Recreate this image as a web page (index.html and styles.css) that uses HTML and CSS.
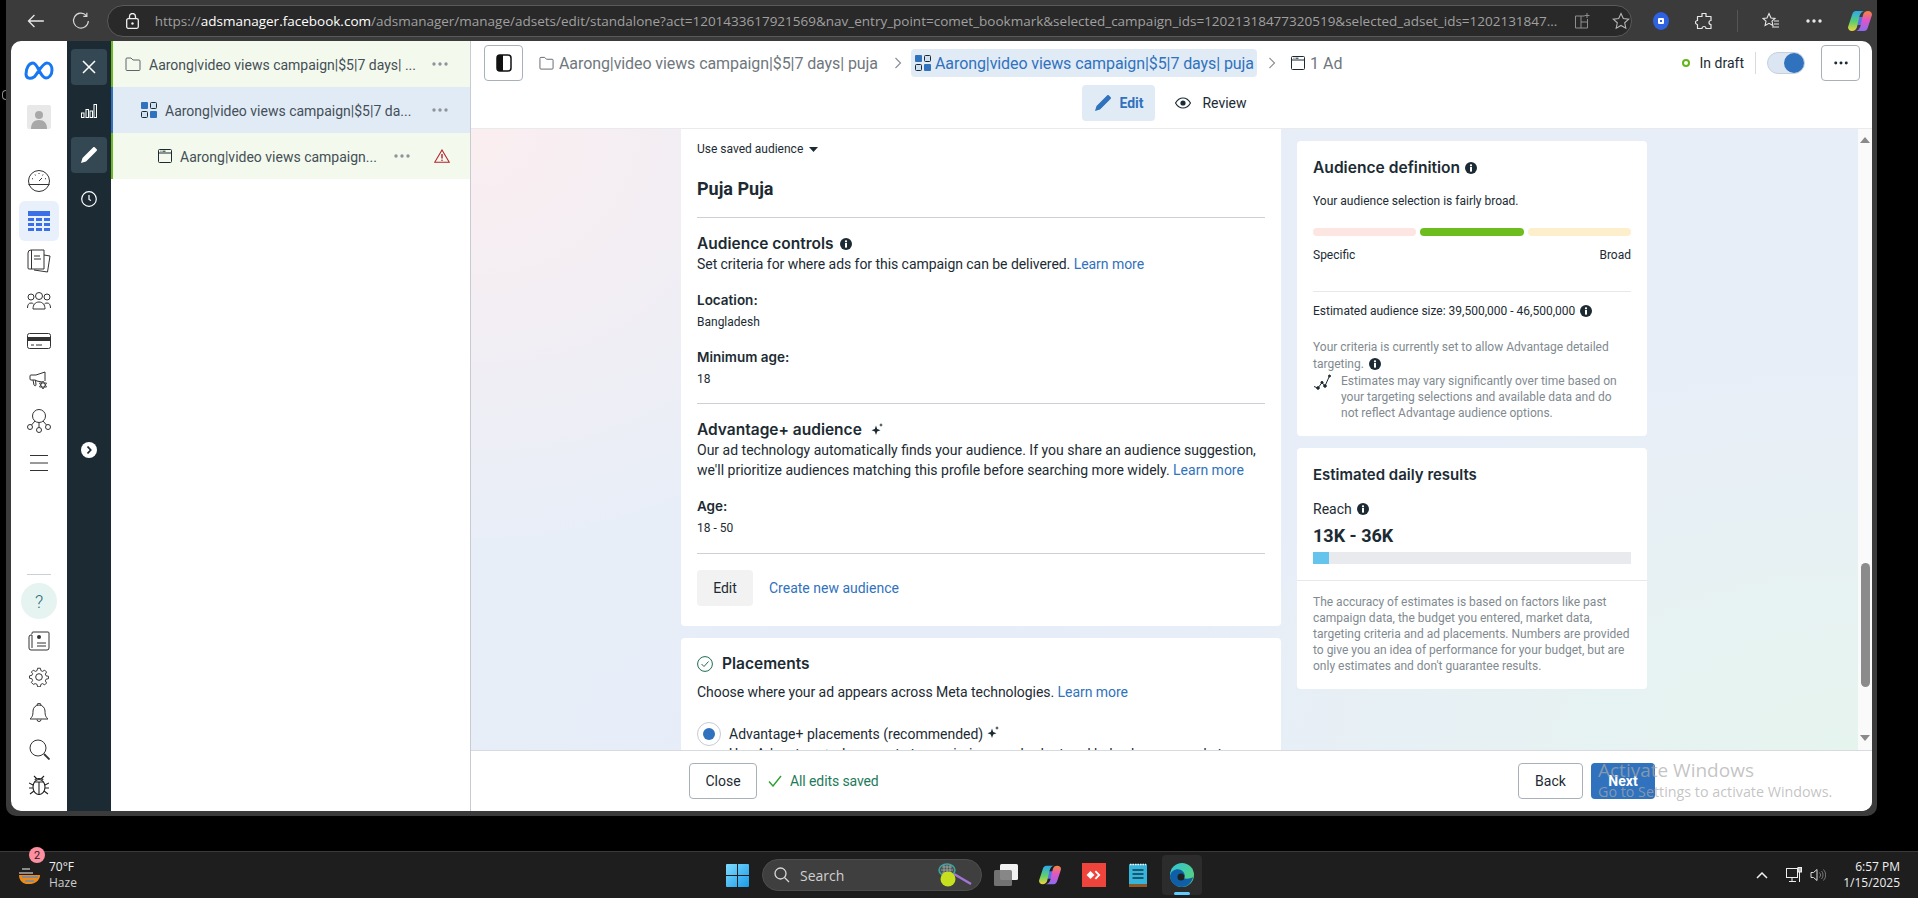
FILE: index.html
```html
<!DOCTYPE html>
<html>
<head>
    <title>Ads Manager - Edit ad set</title>
    <link rel="stylesheet" href="styles.css">
</head>
<body>
    <svg class="sprite" width="0" height="0">
        <defs>
            <linearGradient id="copL" x1="0" y1="0" x2="0" y2="1"><stop offset="0" stop-color="#2aa7f0"/><stop offset=".55" stop-color="#5fd06a"/><stop offset="1" stop-color="#f2d23c"/></linearGradient>
            <linearGradient id="copR" x1="0" y1="0" x2="0" y2="1"><stop offset="0" stop-color="#f5873a"/><stop offset=".45" stop-color="#e255c4"/><stop offset="1" stop-color="#8a6cf0"/></linearGradient>
        </defs>
        <symbol id="info" viewBox="0 0 12 12"><circle cx="6" cy="6" r="6" fill="#1c2b33"/><rect x="5" y="5" width="2" height="4.6" fill="#fff"/><circle cx="6" cy="3.3" r="1.15" fill="#fff"/></symbol>
        <symbol id="sparkle" viewBox="0 0 12 12"><path d="M5 2.5 6.2 6 9.5 7.2 6.2 8.4 5 12 3.8 8.4.5 7.2 3.8 6zM10 0l.6 1.5 1.4.5-1.4.5L10 4l-.6-1.5L8 2l1.400-.5z" fill="#1c2b33"/></symbol>
        <symbol id="dots" viewBox="0 0 16 4"><circle cx="2" cy="2" r="1.7"/><circle cx="8" cy="2" r="1.7"/><circle cx="14" cy="2" r="1.7"/></symbol>
        <symbol id="folder" viewBox="0 0 16 14"><path d="M1 3V2a1 1 0 0 1 1-1h4l2 2h6a1 1 0 0 1 1 1v8.500a1 1 0 0 1-1 1H2a1 1 0 0 1-1-1z" fill="none" stroke="currentColor" stroke-width="1"/></symbol>
        <symbol id="adset" viewBox="0 0 16 16"><rect x="0" y="0" width="7" height="7" rx="1" fill="#3072bd"/><rect x="9.500" y=".5" width="6" height="6" rx="1" fill="#cfe0f3" stroke="#1c2b33"/><rect x=".5" y="9.500" width="6" height="6" rx="1" fill="#cfe0f3" stroke="#1c2b33"/><rect x="9" y="9" width="7" height="7" rx="1" fill="#3072bd"/></symbol>
        <symbol id="adbox" viewBox="0 0 14 14"><rect x=".5" y=".5" width="13" height="13" rx="1" fill="none" stroke="#1c2b33"/><path d="M.5 4h13" stroke="#1c2b33"/><path d="M2.500 2.200h.9M4.500 2.200h3" stroke="#1c2b33"/></symbol>
        <symbol id="copilot" viewBox="0 0 24 24"><path d="M10 8h6l-2 8H8z" fill="#5a6ee8"/><path d="M8 2h9c-3 0-4.500 2-5.500 5L9 18c-.8 2.800-2.500 4-5 4-2.800 0-4.500-2-3.800-4.500L4 6c.7-2.700 2-4 4-4z" fill="url(#copL)"/><path d="M16 22H7c3 0 4.500-2 5.500-5L15 6c.8-2.800 2.500-4 5-4 2.800 0 4.500 2 3.800 4.500L20 18c-.7 2.700-2 4-4 4z" fill="url(#copR)"/></symbol>
    </svg>

    <div class="stray"></div>

    <div class="desktop">
        <div class="browser">
            <div class="toolbar">
                <svg class="tool-back" width="18" height="14" viewBox="0 0 18 14"><path d="M17 7H1.500M7.500 1 1.500 7l6 6" fill="none" stroke="#e8e8e8" stroke-width="1.300"/></svg>
                <svg class="tool-reload" width="18" height="18" viewBox="0 0 18 18"><path d="M14.500 3.500A7.500 7.500 0 1 0 16.500 9M15 .8v3.600h-3.600" fill="none" stroke="#d8d8d8" stroke-width="1.200"/></svg>
                <div class="address">
                    <svg class="lock" width="13" height="16" viewBox="0 0 13 16"><rect x=".7" y="5.700" width="11.600" height="9.600" rx="1.500" fill="none" stroke="#f0f0f0" stroke-width="1.300"/><path d="M3.500 5.500V3.500a3 3 0 0 1 6 0v2" fill="none" stroke="#f0f0f0" stroke-width="1.300"/><circle cx="6.500" cy="10.500" r="1.200" fill="#f0f0f0"/></svg>
                    <div class="url">https://<b>adsmanager.facebook.com</b>/adsmanager/manage/adsets/edit/standalone?act=1201433617921569&amp;nav_entry_point=comet_bookmark&amp;selected_campaign_ids=12021318477320519&amp;selected_adset_ids=1202131847...</div>
                    <svg class="addr-split" width="16" height="16" viewBox="0 0 16 16"><path d="M10.500 3H1.500v12h12V6M7 3v12M7 9h6.500M13 0v5M10.500 2.500h5" fill="none" stroke="#8f8f8f"/></svg>
                    <svg class="addr-star" width="18" height="18" viewBox="0 0 18 18"><path d="m9 1.500 2.300 5 5.400.6-4 3.700 1.100 5.400L9 13.500l-4.800 2.700 1.100-5.400-4-3.700 5.400-.6z" fill="none" stroke="#b5b5b5" stroke-width="1.100"/></svg>
                </div>
                <div class="tool-icons">
                    <svg width="16" height="18" viewBox="0 0 16 18"><ellipse cx="8" cy="9" rx="8" ry="9" fill="#2f62e0"/><rect x="5" y="6" width="6" height="6" rx="1" fill="#fff"/><rect x="7" y="8" width="2" height="2" fill="#2f62e0"/></svg>
                    <svg width="18" height="18" viewBox="0 0 18 18"><path d="M7 1.500h4v3h5v4a2 2 0 0 0 0 4v4h-5a2 2 0 0 0-4 0H2.500v-4a2 2 0 0 1 0-4v-4H7z" fill="none" stroke="#e8e8e8" stroke-width="1.200" stroke-linejoin="round"/></svg>
                    <span class="tool-sep"></span>
                    <svg width="18" height="18" viewBox="0 0 18 18"><path d="M7 1.500 9 6l4 .4-3 2.800.9 4.300L7 11.300l-3.900 2.200.9-4.300-3-2.800L5 6zM12 9h5M12 12h5M10 15h7" fill="none" stroke="#e8e8e8" stroke-width="1.100"/></svg>
                    <svg width="16" height="4" viewBox="0 0 16 4" fill="#e8e8e8"><use href="#dots"/></svg>
                    <svg width="24" height="24"><use href="#copilot"/></svg>
                </div>
            </div>

            <div class="page">
                <nav class="rail">
                    <div class="rail-top">
                        <div class="rail-item rail-meta"><svg width="30" height="20" viewBox="0 0 30 20"><path d="M2 13c0-6 3-11 7-11 5 0 7 15 13 15 3 0 6-3 6-8 0-4-2-7-5-7-5 0-10 12-13 14-3 2-8 2-8-3z" fill="none" stroke="#1877f2" stroke-width="3"/></svg></div>
                        <div class="rail-item rail-avatar"><svg width="24" height="24" viewBox="0 0 24 24"><rect width="24" height="24" rx="2" fill="#e8e8e8"/><circle cx="12" cy="10" r="4" fill="#a8a8a8"/><path d="M4 24c0-6 3-9 8-9s8 3 8 9z" fill="#a8a8a8"/></svg></div>
                        <div class="rail-item"><svg width="24" height="24" viewBox="0 0 24 24" fill="none" stroke="#333"><circle cx="12" cy="12" r="10.500"/><path d="M1.500 15.500h21M12 12l3-3M5 9.500l1 .5M12 4v1M19 9.500l-1 .5M8 5.500l.5 1M16 5.500l-.5 1"/></svg></div>
                        <div class="rail-item rail-active"><svg width="22" height="20" viewBox="0 0 22 20" fill="#3b6fe8"><rect width="22" height="5"/><rect y="7" width="6" height="3"/><rect x="8" y="7" width="6" height="3"/><rect x="16" y="7" width="6" height="3"/><rect y="12" width="6" height="3"/><rect x="8" y="12" width="6" height="3"/><rect x="16" y="12" width="6" height="3"/><rect y="17" width="6" height="3"/><rect x="8" y="17" width="6" height="3"/><rect x="16" y="17" width="6" height="3"/></svg></div>
                        <div class="rail-item"><svg width="24" height="24" viewBox="0 0 24 24" fill="none" stroke="#333"><path d="M17 4V1H4a3 3 0 0 0-3 3v15a1 1 0 0 0 1 1h15V4zM4.500 1v19M7 7h6M7 10h7M17 6l6 1-2.500 16L7 21"/></svg></div>
                        <div class="rail-item"><svg width="24" height="18" viewBox="0 0 24 18" fill="none" stroke="#333"><circle cx="4" cy="5" r="3"/><circle cx="12" cy="4" r="3.500"/><circle cx="20" cy="5" r="3"/><path d="M.5 16c0-3 1-5 3.500-5 1 0 2 .3 2.500 1M23.500 16c0-3-1-5-3.500-5-1 0-2 .3-2.500 1M6 17c0-4 2-7 6-7s6 3 6 7z"/></svg></div>
                        <div class="rail-item"><svg width="24" height="16" viewBox="0 0 24 16"><rect x=".5" y=".5" width="23" height="15" rx="2" fill="none" stroke="#333"/><rect y="4" width="24" height="4" fill="#333"/><path d="M4 12h3M9 12h6" stroke="#333"/></svg></div>
                        <div class="rail-item"><svg width="20" height="20" viewBox="0 0 20 20" fill="none" stroke="#333"><path d="M16 1 7 4H2a1 1 0 0 0-1 1v3a1 1 0 0 0 1 1h4l2 1 5 1M16 1v9M4 9l1 5c.3 1 2 1 2 0l-.5-5"/><path d="m14 10 3.500 6h-7zM14 18l3.500-6h-7z" stroke-width=".9"/></svg></div>
                        <div class="rail-item"><svg width="24" height="24" viewBox="0 0 24 24" fill="none" stroke="#333"><circle cx="12" cy="7" r="6.500"/><circle cx="3" cy="18" r="2.500"/><circle cx="12" cy="21" r="2.500"/><circle cx="21" cy="18" r="2.500"/><path d="M12 13.500v5M8 12l-3.500 4M16 12l3.500 4"/></svg></div>
                        <div class="rail-item rail-menu"><svg width="18" height="16" viewBox="0 0 18 16" stroke="#333"><path d="M0 .5h18M0 8h18M0 15.500h18"/></svg></div>
                    </div>
                    <div class="rail-bottom">
                        <div class="rail-line"></div>
                        <div class="rail-help">?</div>
                        <div class="rail-item-sm"><svg width="22" height="20" viewBox="0 0 22 20" fill="none" stroke="#333"><path d="M4 3V2a1 1 0 0 1 1-1h15a1 1 0 0 1 1 1v15a2 2 0 0 1-2 2H3a2 2 0 0 1-2-2V6a2 2 0 0 1 2-2h1v13M9 12h9M9 15h9"/><circle cx="11" cy="6" r="2" fill="#333" stroke="none"/></svg></div>
                        <div class="rail-item-sm"><svg width="20" height="20" viewBox="0 0 20 20" fill="none" stroke="#333"><circle cx="10" cy="10" r="3.300"/><path d="M8.500 1h3l.5 2.500 1.800.8L16 3l2 2-1.300 2.200.8 1.800L20 9.500v2.500l-2.500.5-.8 1.800 1.300 2.200-2 2-2.200-1.300-1.800.8-.5 2.500h-3l-.5-2.500-1.800-.8L4 18l-2-2 1.300-2.200-.8-1.800L0 11.500V9l2.500-.5.800-1.800L2 5l2-2 2.200 1.300 1.800-.8z" transform="scale(.95) translate(.5 .3)"/></svg></div>
                        <div class="rail-item-sm"><svg width="20" height="21" viewBox="0 0 20 21" fill="none" stroke="#333"><path d="M1 16c2-2 3-3 3-8a6 6 0 0 1 12 0c0 5 1 6 3 8zM8 2.200a2 2 0 0 1 4 0M8 16.500a2 2 0 1 0 4 0"/></svg></div>
                        <div class="rail-item-sm"><svg width="21" height="21" viewBox="0 0 21 21" fill="none" stroke="#333"><circle cx="9" cy="9" r="8"/><path d="m15 15 5.500 5.500" stroke-width="1.800"/></svg></div>
                        <div class="rail-item-sm"><svg width="20" height="20" viewBox="0 0 20 20" fill="none" stroke="#222" stroke-width="1.100"><ellipse cx="10" cy="12" rx="6" ry="7.500"/><path d="M10 7v12M6 7h8M6 5c0-2 8-2 8 0M5 1l3 3M15 1l-3 3M0 8l4 2M20 8l-4 2M0 13h4M20 13h-4M1 19l4-3M19 19l-4-3"/></svg></div>
                    </div>
                </nav>

                <aside class="side">
                    <div class="side-btn"><svg width="14" height="14" viewBox="0 0 14 14" stroke="#fff" stroke-width="1.500"><path d="m1 1 12 12M13 1 1 13"/></svg></div>
                    <div class="side-btn side-plain"><svg width="16" height="14" viewBox="0 0 16 14" fill="none" stroke="#fff"><rect x=".5" y="9" width="2.500" height="4.500"/><rect x="5" y="5.500" width="2.500" height="8"/><rect x="9" y="7" width="2.500" height="6.500"/><rect x="13" y=".5" width="2.500" height="13"/></svg></div>
                    <div class="side-btn"><svg width="16" height="16" viewBox="0 0 16 16" fill="#fff"><path d="M11.500 1 15 4.500 5 14.500 0 16l1.500-5zM12.300.3c.5-.4 1-.4 1.400 0l2 2c.4.400.4 1 0 1.400l-.7.7L11.500 1z"/></svg></div>
                    <div class="side-btn side-plain"><svg width="16" height="16" viewBox="0 0 16 16" fill="none" stroke="#fff" stroke-width="1.200"><circle cx="8" cy="8" r="7.300"/><path d="M8 4v4.500l2 1"/></svg></div>
                    <div class="side-open"><svg width="16" height="16" viewBox="0 0 16 16"><circle cx="8" cy="8" r="8" fill="#fff"/><path d="m6.500 4.500 3.200 3.500-3.200 3.500" fill="none" stroke="#1c2b33" stroke-width="1.800"/></svg></div>
                </aside>

                <section class="tree">
                    <div class="tree-row row-green level-1">
                        <svg class="tree-icon folder-grey" width="16" height="14"><use href="#folder"/></svg>
                        <span class="tree-name">Aarong|video views campaign|$5|7 days| ...</span>
                        <svg class="dots-grey" width="16" height="4"><use href="#dots"/></svg>
                    </div>
                    <div class="tree-row row-blue level-2">
                        <svg class="tree-icon" width="16" height="16"><use href="#adset"/></svg>
                        <span class="tree-name">Aarong|video views campaign|$5|7 da...</span>
                        <svg class="dots-grey" width="16" height="4"><use href="#dots"/></svg>
                    </div>
                    <div class="tree-row row-green level-3">
                        <svg class="tree-icon" width="14" height="14"><use href="#adbox"/></svg>
                        <span class="tree-name">Aarong|video views campaign...</span>
                        <svg class="dots-grey" width="16" height="4"><use href="#dots"/></svg>
                        <svg class="tree-warn" width="16" height="14" viewBox="0 0 16 14"><path d="M8 1 15.300 13.300H.7z" fill="none" stroke="#b5202e" stroke-width="1.100"/><path d="M8 5v4.500" stroke="#b5202e" stroke-width="1.400"/><circle cx="8" cy="11.200" r=".8" fill="#b5202e"/></svg>
                    </div>
                </section>

                <main class="main">
                    <header class="head">
                        <div class="crumbs">
                            <div class="btn-square"><svg width="16" height="18" viewBox="0 0 16 18"><rect x="1" y="1" width="14" height="16" rx="3" fill="#fff" stroke="#111" stroke-width="1.500"/><path d="M4 1h3v16H4a3 3 0 0 1-3-3V4a3 3 0 0 1 3-3z" fill="#111"/></svg></div>
                            <div class="crumb crumb-first">
                                <svg class="folder-grey" width="15" height="14"><use href="#folder"/></svg>
                                <span class="crumb-label">Aarong|video views campaign|$5|7 days| puja</span>
                            </div>
                            <svg class="crumb-arrow" width="8" height="12" viewBox="0 0 8 12"><path d="m1.500 1 5 5-5 5" fill="none" stroke="#8a9096" stroke-width="1.200"/></svg>
                            <div class="crumb crumb-current">
                                <svg width="16" height="16"><use href="#adset"/></svg>
                                <span class="crumb-label">Aarong|video views campaign|$5|7 days| puja</span>
                            </div>
                            <svg class="crumb-arrow arrow-2" width="8" height="12" viewBox="0 0 8 12"><path d="m1.500 1 5 5-5 5" fill="none" stroke="#8a9096" stroke-width="1.200"/></svg>
                            <div class="crumb crumb-ad">
                                <svg width="14" height="14"><use href="#adbox"/></svg>
                                <span>1 Ad</span>
                            </div>
                            <div class="status">
                                <span class="status-dot"></span>
                                <span class="status-text">In draft</span>
                                <span class="status-line"></span>
                                <span class="switch"><span class="knob"></span></span>
                                <div class="btn-square"><svg width="14" height="4" fill="#1c2b33"><use href="#dots"/></svg></div>
                            </div>
                        </div>
                        <div class="tabs">
                            <div class="tab tab-on">
                                <svg width="16" height="16" viewBox="0 0 16 16" fill="#3072bd"><path d="M11.500 1 15 4.500 5 14.500 0 16l1.500-5zM12.300.3c.5-.4 1-.4 1.400 0l2 2c.4.400.4 1 0 1.400l-.7.7L11.500 1z"/></svg>
                                <span>Edit</span>
                            </div>
                            <div class="tab tab-off">
                                <svg width="16" height="12" viewBox="0 0 16 12"><path d="M.5 6C2.500 2.500 5 1 8 1s5.500 1.500 7.500 5c-2 3.500-4.500 5-7.500 5S2.500 9.500.5 6z" fill="none" stroke="#1c2b33" stroke-width="1.200"/><circle cx="8" cy="6" r="2.600" fill="#1c2b33"/></svg>
                                <span>Review</span>
                            </div>
                        </div>
                    </header>

                    <div class="body-wrap">
                        <div class="canvas">
                            <div class="col-main">
                                <div class="card card-audience">
                                    <div class="saved">Use saved audience <svg width="9" height="5" viewBox="0 0 9 5"><path d="M0 0h9L4.500 5z" fill="#1c2b33"/></svg></div>
                                    <div class="audience-name">Puja Puja</div>
                                    <hr class="rule rule-name">
                                    <h3 class="sec-title">Audience controls <svg class="ic-info-title" width="12" height="12"><use href="#info"/></svg></h3>
                                    <p class="copy copy-tight">Set criteria for where ads for this campaign can be delivered. <a class="link">Learn more</a></p>
                                    <div class="field-label">Location:</div>
                                    <div class="field-value">Bangladesh</div>
                                    <div class="field-label field-next">Minimum age:</div>
                                    <div class="field-value">18</div>
                                    <hr class="rule">
                                    <h3 class="sec-title">Advantage+ audience <svg class="ic-spark-title" width="12" height="12"><use href="#sparkle"/></svg></h3>
                                    <p class="copy">Our ad technology automatically finds your audience. If you share an audience suggestion, we'll prioritize audiences matching this profile before searching more widely. <a class="link">Learn more</a></p>
                                    <div class="field-label">Age:</div>
                                    <div class="field-value">18 - 50</div>
                                    <hr class="rule rule-age">
                                    <div class="actions">
                                        <div class="btn-grey">Edit</div>
                                        <a class="link">Create new audience</a>
                                    </div>
                                </div>
                                <div class="card card-place">
                                    <h3 class="place-title">
                                        <svg width="16" height="16" viewBox="0 0 16 16" fill="none" stroke="#1e6b52"><circle cx="8" cy="8" r="7.400"/><path d="m4.500 8 2.500 2.500 4.500-5"/></svg>
                                        Placements
                                    </h3>
                                    <p class="copy copy-tight place-copy">Choose where your ad appears across Meta technologies. <a class="link">Learn more</a></p>
                                    <div class="radio-row">
                                        <span class="radio"><span class="radio-dot"></span></span>
                                        <div>
                                            <div class="radio-title">Advantage+ placements (recommended) <svg width="12" height="12"><use href="#sparkle"/></svg></div>
                                            <div class="radio-sub">Use Advantage+ placements to maximize your budget and help show your ads to more people.</div>
                                        </div>
                                    </div>
                                </div>
                            </div>

                            <div class="col-side">
                                <div class="card card-def">
                                    <h3 class="side-title def-title">Audience definition <svg class="ic-info" width="12" height="12"><use href="#info"/></svg></h3>
                                    <p class="small def-text">Your audience selection is fairly broad.</p>
                                    <div class="meter">
                                        <span class="meter-low"></span>
                                        <span class="meter-mid"></span>
                                        <span class="meter-high"></span>
                                    </div>
                                    <div class="meter-labels small"><span>Specific</span><span>Broad</span></div>
                                    <hr class="rule-light">
                                    <p class="small est-size">Estimated audience size: 39,500,000 - 46,500,000 <svg class="ic-info-gap" width="12" height="12"><use href="#info"/></svg></p>
                                    <p class="small muted criteria">Your criteria is currently set to allow Advantage detailed targeting. <svg class="ic-info-gap" width="12" height="12"><use href="#info"/></svg></p>
                                    <div class="note">
                                        <svg width="18" height="16" viewBox="0 0 18 16" fill="#1c2b33" stroke="#1c2b33"><path d="M1 12.500 5 14 9 8.500l3 3.500 4-9" fill="none"/><circle cx="5" cy="14" r="1.300"/><circle cx="9" cy="8.500" r="1.100"/><circle cx="12" cy="12" r="1.300"/><circle cx="16.500" cy="2" r="1"/></svg>
                                        <p class="small muted">Estimates may vary significantly over time based on your targeting selections and available data and do not reflect Advantage audience options.</p>
                                    </div>
                                </div>
                                <div class="card card-results">
                                    <h3 class="side-title">Estimated daily results</h3>
                                    <div class="reach">Reach <svg width="12" height="12"><use href="#info"/></svg></div>
                                    <div class="reach-num">13K - 36K</div>
                                    <div class="reach-bar"><span class="reach-fill"></span></div>
                                    <hr class="rule-results">
                                    <p class="small muted results-note">The accuracy of estimates is based on factors like past campaign data, the budget you entered, market data, targeting criteria and ad placements. Numbers are provided to give you an idea of performance for your budget, but are only estimates and don't guarantee results.</p>
                                </div>
                            </div>
                        </div>
                        <div class="scrollbar">
                            <span class="sb-up"></span>
                            <span class="sb-thumb"></span>
                            <span class="sb-down"></span>
                        </div>
                    </div>

                    <footer class="foot">
                        <div class="btn-out btn-close">Close</div>
                        <svg class="saved-check" width="14" height="12" viewBox="0 0 14 12"><path d="m1 6.500 4 4.500 8-10" fill="none" stroke="#2f9e2f" stroke-width="1.400"/></svg>
                        <span class="saved-text">All edits saved</span>
                        <div class="btn-out btn-back">Back</div>
                        <div class="btn-next">Next</div>
                    </footer>
                </main>
            </div>
        </div>
    </div>

    <div class="taskbar">
        <div class="task-left">
            <svg width="24" height="24" viewBox="0 0 24 24"><path d="M1 12h21c0 4-3 8-9 9H8c-4-1-7-4-7-9z" fill="#f08a17"/><path d="M4 6h8M1 10h14M4 14h16M7 18h9" stroke="#8a8a8a" stroke-width="2"/></svg>
            <span class="weather-badge">2</span>
            <div class="weather"><div>70°F</div><div class="weather-sub">Haze</div></div>
        </div>
        <div class="task-mid">
            <svg class="win-logo" width="23" height="23" viewBox="0 0 23 23"><defs><linearGradient id="win" x1="0" y1="0" x2="1" y2="1"><stop offset="0" stop-color="#7fdcff"/><stop offset="1" stop-color="#1a9be8"/></linearGradient></defs><path d="M0 1a1 1 0 0 1 1-1h10v11H0zM12 0h10a1 1 0 0 1 1 1v10H12zM0 12h11v11H1a1 1 0 0 1-1-1zM12 12h11v10a1 1 0 0 1-1 1H12z" fill="url(#win)"/></svg>
            <div class="search">
                <svg width="16" height="16" viewBox="0 0 16 16" fill="none" stroke="#d8d8d8" stroke-width="1.300"><circle cx="6.500" cy="6.500" r="5.500"/><path d="m10.500 10.500 4.500 4.500"/></svg>
                <span>Search</span>
                <svg class="search-art" width="34" height="24" viewBox="0 0 34 24"><path d="M16 11 33 21" stroke="#a174d6" stroke-width="2.500"/><ellipse cx="9" cy="7" rx="8" ry="6" fill="#4a5454" stroke="#3aa6a0" stroke-width="1.500"/><path d="M4 4h10M3 7h12M4 10h10M6 2v9M9 2v9M12 2v9" stroke="#c8c8c8" stroke-width=".6"/><circle cx="10" cy="16" r="7.500" fill="#c6e01f"/></svg>
            </div>
            <svg class="task-icon ic-view" width="24" height="22" viewBox="0 0 24 22"><rect x="6" width="18" height="16" rx="1.500" fill="#f2f2f2"/><rect y="6" width="18" height="16" rx="1.500" fill="#7b7b7b" opacity=".9"/></svg>
            <svg class="task-icon ic-copilot" width="22" height="22"><use href="#copilot"/></svg>
            <svg class="task-icon ic-any" width="24" height="24" viewBox="0 0 24 24"><rect width="24" height="24" fill="#ef443b"/><path d="m8.500 8 4 4-4 4-4-4z" fill="#fff"/><path d="m14 7.500 4.500 4.500-4.500 4.500-1.300-1.300 3.200-3.200-3.200-3.200z" fill="#fff"/></svg>
            <svg class="task-icon ic-note" width="18" height="24" viewBox="0 0 18 24"><rect y="1" width="18" height="23" rx="1" fill="#35b4dc"/><rect y="21" width="18" height="3" fill="#8a5a2b"/><path d="M1 1.500h16" stroke="#fff" stroke-width="1.500" stroke-dasharray="1.500 1"/><path d="M3.500 7h11M3.500 11h11M3.500 15h11" stroke="#103a4d" stroke-width="1.500"/></svg>
            <div class="edge-box">
                <svg width="24" height="24" viewBox="0 0 24 24"><defs><linearGradient id="edgeg" x1="0" y1="0" x2="1" y2="1"><stop offset="0" stop-color="#2fc4d8"/><stop offset="1" stop-color="#5fd46a"/></linearGradient></defs><circle cx="12" cy="12" r="12" fill="url(#edgeg)"/><path d="M0 13C1 7 7 5 11 7c4 2 5 7 2 8 3 1 7 1 10-1-1 6-6 10-11 10C5 24 0 19 0 13z" fill="#0f5fa8"/><circle cx="11" cy="14" r="3.500" fill="#1f1f1f"/></svg>
                <span class="edge-mark"></span>
            </div>
        </div>
        <div class="task-right">
            <svg width="12" height="7" viewBox="0 0 12 7"><path d="m1 6 5-5 5 5" fill="none" stroke="#f0f0f0" stroke-width="1.500"/></svg>
            <svg class="tray-net" width="16" height="16" viewBox="0 0 16 16" fill="none" stroke="#eee"><rect x=".5" y="1.500" width="11" height="9"/><path d="M6 11v3M3 14.500h7M13.500 4v11"/><rect x="12" y=".5" width="3.500" height="4.500" fill="#bbb"/></svg>
            <svg class="tray-vol" width="16" height="14" viewBox="0 0 16 14" fill="none" stroke="#ddd"><path d="M1 4.500h2.500L7 1.500v11l-3.500-3H1z"/><path d="M9.500 4.500a3.500 3.500 0 0 1 0 5M11.500 3a6 6 0 0 1 0 8M13.500 1.500a8 8 0 0 1 0 11" stroke="#777"/></svg>
            <div class="clock"><div>6:57 PM</div><div>1/15/2025</div></div>
        </div>
    </div>

    <div class="activate">
        <div class="activate-big">Activate Windows</div>
        <div class="activate-small">Go to Settings to activate Windows.</div>
    </div>
</body>
</html>
```

FILE: styles.css
```css
* {
    box-sizing: border-box;
}
html, body {
    margin: 0;
    height: 898px;
    overflow: hidden;
}
body {
    width: 1918px;
    background-color: #000;
    font-family: Roboto, "Liberation Sans", sans-serif;
    color: #1c2b33;
    position: relative;
}
h3, p {
    margin: 0;
}
hr {
    border: none;
    margin: 0;
}
.sprite {
    position: absolute;
}
.stray {
    position: absolute;
    left: 2px;
    top: 90px;
    width: 4px;
    height: 10px;
    border: 1px solid #8a8a8a;
    border-right: none;
    border-radius: 4px 0 0 4px;
}

/* browser frame */
.desktop {
    height: 851px;
    padding: 0 41px 35px 6px;
}
.browser {
    height: 816px;
    background-color: #3b3b3b;
    border-radius: 0 0 10px 10px;
    padding: 0 5px 5px;
    display: flex;
    flex-direction: column;
}
.toolbar {
    height: 41px;
    display: flex;
    align-items: center;
    flex-shrink: 0;
}
.tool-back {
    margin-left: 16px;
}
.tool-reload {
    margin-left: 27px;
}
.address {
    width: 1539px;
    height: 32px;
    margin-left: 17px;
    background-color: #292929;
    border: 1px solid #5a5a5a;
    border-radius: 16px;
    display: flex;
    align-items: center;
    padding-left: 18px;
}
.url {
    width: 1392px;
    flex-shrink: 0;
    margin-left: 16px;
    font-family: "Open Sans", sans-serif;
    font-size: 13.5px;
    color: #a0a0a0;
    white-space: nowrap;
}
.url b {
    font-weight: 400;
    color: #fff;
}
.addr-split {
    margin-left: 27px;
}
.addr-star {
    margin-left: 22px;
}
.tool-icons {
    display: flex;
    align-items: center;
    margin-left: 21px;
    gap: 26px;
}
.tool-sep {
    width: 1px;
    height: 22px;
    background-color: #555;
    margin: 0 -2px;
}

/* page */
.page {
    flex: 1;
    min-height: 0;
    background-color: #fff;
    border-radius: 10px;
    overflow: hidden;
    display: flex;
}
.rail {
    width: 56px;
    flex-shrink: 0;
    padding: 10px 8px 8px;
    display: flex;
    flex-direction: column;
    justify-content: space-between;
}
.rail-item {
    height: 40px;
    display: flex;
    align-items: center;
    justify-content: center;
    border-radius: 6px;
}
.rail-avatar {
    margin-top: 6px;
    margin-bottom: 24px;
}
.rail-active {
    background-color: #e7f0fb;
}
.rail-menu {
    margin-top: 2px;
}
.rail-bottom {
    display: flex;
    flex-direction: column;
    align-items: center;
}
.rail-line {
    width: 24px;
    height: 1px;
    background-color: #c9d0d6;
    margin-bottom: 8px;
}
.rail-help {
    width: 36px;
    height: 36px;
    border-radius: 50%;
    background-color: #e6f4f1;
    color: #2a6a7a;
    font-size: 18px;
    font-weight: 300;
    display: flex;
    align-items: center;
    justify-content: center;
    margin-bottom: 4px;
}
.rail-item-sm {
    width: 40px;
    height: 36px;
    display: flex;
    align-items: center;
    justify-content: center;
}
.side {
    width: 44px;
    flex-shrink: 0;
    background-color: #1c2b33;
    padding-top: 8px;
    display: flex;
    flex-direction: column;
    align-items: center;
    gap: 8px;
}
.side-btn {
    width: 36px;
    height: 36px;
    border-radius: 4px;
    background-color: #344854;
    display: flex;
    align-items: center;
    justify-content: center;
}
.side-plain {
    background-color: transparent;
}
.side-open {
    margin-top: 217px;
    height: 16px;
}

/* campaign tree */
.tree {
    width: 360px;
    flex-shrink: 0;
    border-right: 1px solid #c8ccd0;
}
.tree-row {
    height: 46px;
    display: flex;
    align-items: center;
    border-left: 2px solid #6cbb1e;
    font-size: 14px;
    color: #444f57;
}
.row-green {
    background-color: #f3f9ec;
}
.row-blue {
    background-color: #e1ebf6;
    border-left-color: #3072bd;
}
.tree-name {
    white-space: nowrap;
    margin-left: 8px;
    padding-top: 2px;
}
.level-1 {
    padding-left: 12px;
}
.level-1 .tree-name {
    width: 263px;
}
.level-2 {
    padding-left: 28px;
}
.level-2 .tree-name {
    width: 243px;
}
.level-3 {
    padding-left: 45px;
}
.level-3 .tree-name {
    width: 194px;
}
.dots-grey {
    fill: #8d949a;
    margin-left: 20px;
}
.level-2 .dots-grey {
    margin-left: 24px;
}
.tree-warn {
    margin-left: 24px;
}
.tree-icon {
    flex-shrink: 0;
}
.folder-grey {
    color: #5c656c;
}

/* main head */
.main {
    flex: 1;
    min-width: 0;
    display: flex;
    flex-direction: column;
}
.head {
    height: 88px;
    flex-shrink: 0;
    border-bottom: 1px solid #e9eaec;
    padding-top: 4px;
}
.crumbs {
    height: 36px;
    display: flex;
    align-items: center;
    padding: 0 12px 0 13px;
    font-size: 16px;
    color: #6f777d;
}
.crumb-label {
    width: 319px;
    letter-spacing: -0.09px;
}
.btn-square {
    width: 39px;
    height: 36px;
    border: 1px solid #a9b1b8;
    border-radius: 4px;
    display: flex;
    align-items: center;
    justify-content: center;
    background-color: #fff;
}
.crumb {
    display: flex;
    align-items: center;
    gap: 5px;
    white-space: nowrap;
}
.crumb-first {
    margin-left: 16px;
}
.crumb-arrow {
    margin-left: 16px;
}
.crumb-current {
    margin-left: 9px;
    height: 28px;
    padding: 0 3px 0 4px;
    gap: 4px;
    border-radius: 4px;
    background-color: #e1ebf6;
    color: #3072bd;
}
.arrow-2 {
    margin-left: 11px;
}
.crumb-ad {
    margin-left: 15px;
}
.status {
    margin-left: auto;
    display: flex;
    align-items: center;
    font-size: 14px;
    color: #1c2b33;
}
.status-dot {
    width: 8px;
    height: 8px;
    border: 2px solid #63b31a;
    border-radius: 50%;
}
.status-text {
    margin-left: 10px;
}
.status-line {
    width: 1px;
    height: 22px;
    background-color: #d8dbde;
    margin: 0 11px;
}
.switch {
    width: 38px;
    height: 22px;
    border-radius: 11px;
    background-color: #dce6f2;
    border: 1px solid #c4d0dd;
    display: flex;
    justify-content: flex-end;
    margin-right: 16px;
}
.knob {
    width: 20px;
    height: 20px;
    border-radius: 50%;
    background-color: #3072bd;
}
.tabs {
    height: 36px;
    margin-top: 4px;
    display: flex;
    justify-content: center;
    font-size: 14px;
}
.tab {
    display: flex;
    align-items: center;
    border-radius: 4px;
}
.tab-on {
    background-color: #e1ebf6;
    color: #3072bd;
    font-weight: 700;
    padding: 0 10px 0 13px;
    gap: 8px;
    width: 73px;
}
.tab-off {
    margin-left: 8px;
    padding: 0 14px 0 12px;
    gap: 11px;
}

/* scrolled content */
.body-wrap {
    flex: 1;
    min-height: 0;
    display: flex;
    overflow: hidden;
}
.canvas {
    flex: 1;
    display: flex;
    gap: 16px;
    padding-left: 210px;
    background-color: #e8eef8;
    background-image:
        radial-gradient(ellipse 480px 420px at 0% 0%, #fbeef0 0%, rgba(251, 238, 240, 0) 100%),
        radial-gradient(ellipse 700px 400px at 100% 100%, #e6f4ee 0%, rgba(230, 244, 238, 0) 100%),
        radial-gradient(ellipse 600px 300px at 30% 100%, #e6edf8 0%, rgba(230, 237, 248, 0) 100%);
}
.col-main {
    width: 600px;
    flex-shrink: 0;
}
.col-side {
    width: 350px;
    flex-shrink: 0;
    padding-top: 12px;
}
.card {
    background-color: #fff;
    border-radius: 4px;
}
.card-audience {
    border-radius: 0 0 4px 4px;
    padding: 12px 16px 20px;
}
.saved {
    font-size: 12px;
    line-height: 16px;
}
.saved svg {
    margin-left: 3px;
    vertical-align: 1px;
}
.audience-name {
    margin-top: 20px;
    font-size: 18px;
    line-height: 24px;
    font-weight: 700;
}
.rule {
    height: 1px;
    margin-top: 16px;
    background-color: #cdd1d5;
}
.sec-title {
    margin-top: 16px;
    font-family: Inter, Roboto, sans-serif;
    font-size: 15.5px;
    line-height: 20px;
    font-weight: 600;
}
.ic-info-title {
    margin-left: 3px;
    vertical-align: -1px;
}
.ic-spark-title {
    margin-left: 5px;
    vertical-align: 0;
}
.copy {
    font-size: 14px;
    line-height: 20px;
}
.copy-tight {
    letter-spacing: -0.05px;
}
.link {
    color: #3072bd;
}
.field-label {
    margin-top: 17px;
    font-family: Inter, Roboto, sans-serif;
    font-size: 13.5px;
    line-height: 18px;
    font-weight: 600;
}
.field-next {
    margin-top: 18px;
}
.field-value {
    margin-top: 5px;
    font-size: 12px;
    line-height: 16px;
}
.rule-age {
    margin-top: 17px;
}
.actions {
    margin-top: 16px;
    display: flex;
    align-items: center;
    gap: 16px;
    font-size: 14px;
}
.btn-grey {
    width: 56px;
    height: 36px;
    border-radius: 4px;
    background-color: #f2f2f2;
    display: flex;
    align-items: center;
    justify-content: center;
}
.card-place {
    margin-top: 12px;
    padding: 16px;
    height: 160px;
}
.place-title {
    display: flex;
    align-items: center;
    gap: 9px;
    font-family: Inter, Roboto, sans-serif;
    font-size: 15.5px;
    line-height: 20px;
    font-weight: 600;
}
.place-copy {
    margin-top: 8px;
}
.radio-row {
    margin-top: 20px;
    display: flex;
    gap: 8px;
    font-size: 14px;
    line-height: 20px;
}
.radio {
    width: 24px;
    height: 24px;
    border-radius: 50%;
    border: 1px solid #c5ccd3;
    display: flex;
    align-items: center;
    justify-content: center;
    flex-shrink: 0;
}
.radio-dot {
    width: 12px;
    height: 12px;
    border-radius: 50%;
    background-color: #3072bd;
}
.radio-title {
    padding-top: 2px;
}
.radio-title svg {
    vertical-align: 1px;
}

/* side cards */
.small {
    font-size: 12px;
    line-height: 16px;
}
.muted {
    color: #818a90;
}
.card-def {
    height: 295px;
    padding: 17px 16px 0;
}
.side-title {
    font-family: Inter, Roboto, sans-serif;
    font-size: 15px;
    line-height: 20px;
    font-weight: 600;
}
.def-title {
    font-size: 15.6px;
}
.ic-info {
    margin-left: 1px;
    vertical-align: -1px;
}
.def-text {
    margin-top: 15px;
}
.meter {
    margin-top: 19px;
    display: flex;
    gap: 4px;
}
.meter span {
    flex: 1;
    height: 8px;
    border-radius: 4px;
}
.meter-low {
    background-color: #fde5e2;
}
.meter-mid {
    background-color: #6ebd1e;
}
.meter-high {
    background-color: #fdefcc;
}
.meter-labels {
    margin-top: 11px;
    display: flex;
    justify-content: space-between;
}
.rule-light {
    height: 1px;
    margin-top: 28px;
    background-color: #e6e8ea;
}
.est-size {
    margin-top: 11px;
}
.ic-info-gap {
    margin-left: 2px;
    vertical-align: -2px;
}
.criteria {
    margin-top: 20px;
    line-height: 17px;
}
.note {
    display: flex;
    gap: 10px;
    align-items: flex-start;
}
.note svg {
    flex-shrink: 0;
    margin-top: 1px;
}
.card-results {
    margin-top: 12px;
    height: 241px;
    padding: 17px 16px 0;
}
.reach {
    margin-top: 16px;
    font-size: 14px;
    line-height: 16px;
}
.reach svg {
    margin-left: 2px;
    vertical-align: -1px;
}
.reach-num {
    margin-top: 7px;
    font-size: 18px;
    line-height: 24px;
    font-weight: 700;
}
.reach-bar {
    margin-top: 4px;
    height: 12px;
    background-color: #e8eaee;
}
.reach-fill {
    display: block;
    width: 16px;
    height: 12px;
    background-color: #64c4ec;
}
.rule-results {
    height: 1px;
    margin: 16px -16px 0;
    background-color: #e6e8ea;
}
.results-note {
    margin-top: 13px;
}
.scrollbar {
    width: 14px;
    flex-shrink: 0;
    background-color: #fafafa;
    display: flex;
    flex-direction: column;
    align-items: center;
    padding: 8px 0 9px;
}
.sb-up, .sb-down {
    width: 0;
    height: 0;
    border-left: 5px solid transparent;
    border-right: 5px solid transparent;
}
.sb-up {
    border-bottom: 6px solid #8a8a8a;
}
.sb-down {
    border-top: 6px solid #8a8a8a;
}
.sb-thumb {
    width: 9px;
    height: 124px;
    margin-top: 420px;
    margin-bottom: auto;
    border-radius: 5px;
    background-color: #8b8b8b;
}

/* footer */
.foot {
    height: 61px;
    flex-shrink: 0;
    background-color: #fff;
    border-top: 1px solid #d8dbde;
    display: flex;
    align-items: center;
    padding-left: 218px;
    font-size: 14px;
}
.btn-out {
    height: 36px;
    border: 1px solid #a9b1b8;
    border-radius: 4px;
    display: flex;
    align-items: center;
    justify-content: center;
}
.btn-close {
    width: 68px;
}
.saved-check {
    margin-left: 11px;
}
.saved-text {
    margin-left: 8px;
    color: #1e7a5a;
    font-size: 14px;
    letter-spacing: -0.1px;
}
.btn-back {
    width: 65px;
    margin-left: auto;
}
.btn-next {
    width: 64px;
    height: 36px;
    margin-left: 8px;
    margin-right: 217px;
    border-radius: 4px;
    background-color: #3072bd;
    color: #fff;
    font-weight: 700;
    display: flex;
    align-items: center;
    justify-content: center;
}

/* windows taskbar */
.taskbar {
    height: 47px;
    background-color: #1e1e1e;
    border-top: 1px solid #3a3a3a;
    display: flex;
    align-items: center;
    color: #f0f0f0;
}
.task-left {
    width: 726px;
    flex-shrink: 0;
    padding-left: 18px;
    display: flex;
    align-items: center;
    position: relative;
}
.weather-badge {
    position: absolute;
    left: 29px;
    top: -12px;
    width: 16px;
    height: 16px;
    border-radius: 50%;
    background-color: #ff8fa0;
    color: #222;
    font-size: 11px;
    display: flex;
    align-items: center;
    justify-content: center;
}
.weather {
    margin-left: 7px;
    font-size: 12px;
    line-height: 16px;
    font-family: "Open Sans", sans-serif;
}
.weather-sub {
    color: #ccc;
}
.task-mid {
    display: flex;
    align-items: center;
}
.search {
    width: 220px;
    height: 32px;
    margin-left: 13px;
    border-radius: 16px;
    background-color: #3f3f3f;
    border: 1px solid #4e4e4e;
    display: flex;
    align-items: center;
    padding-left: 11px;
    font-family: "Open Sans", sans-serif;
    font-size: 14px;
    color: #d0d0d0;
    position: relative;
}
.search span {
    margin-left: 10px;
}
.search-art {
    margin-left: auto;
    margin-right: 9px;
}
.ic-view {
    margin-left: 12px;
}
.ic-copilot {
    margin-left: 21px;
}
.ic-any {
    margin-left: 21px;
}
.ic-note {
    margin-left: 23px;
}
.edge-box {
    width: 40px;
    height: 40px;
    margin-left: 15px;
    border-radius: 4px;
    background-color: #2c2c2c;
    display: flex;
    align-items: center;
    justify-content: center;
    position: relative;
}
.edge-mark {
    position: absolute;
    bottom: 0;
    left: 12px;
    width: 16px;
    height: 3px;
    border-radius: 2px;
    background-color: #60cdff;
}
.task-right {
    margin-left: auto;
    padding-right: 18px;
    display: flex;
    align-items: center;
}
.tray-net {
    margin-left: 18px;
}
.tray-vol {
    margin-left: 8px;
}
.clock {
    margin-left: 17px;
    font-family: "Open Sans", sans-serif;
    font-size: 12px;
    line-height: 16px;
    text-align: right;
}

/* watermark over the page */
.activate {
    position: absolute;
    left: 1598px;
    top: 758px;
    font-family: "Open Sans", sans-serif;
    color: rgba(170, 170, 170, 0.7);
    pointer-events: none;
}
.activate-big {
    font-size: 19px;
    line-height: 24px;
}
.activate-small {
    font-size: 14.3px;
    line-height: 20px;
}
```
